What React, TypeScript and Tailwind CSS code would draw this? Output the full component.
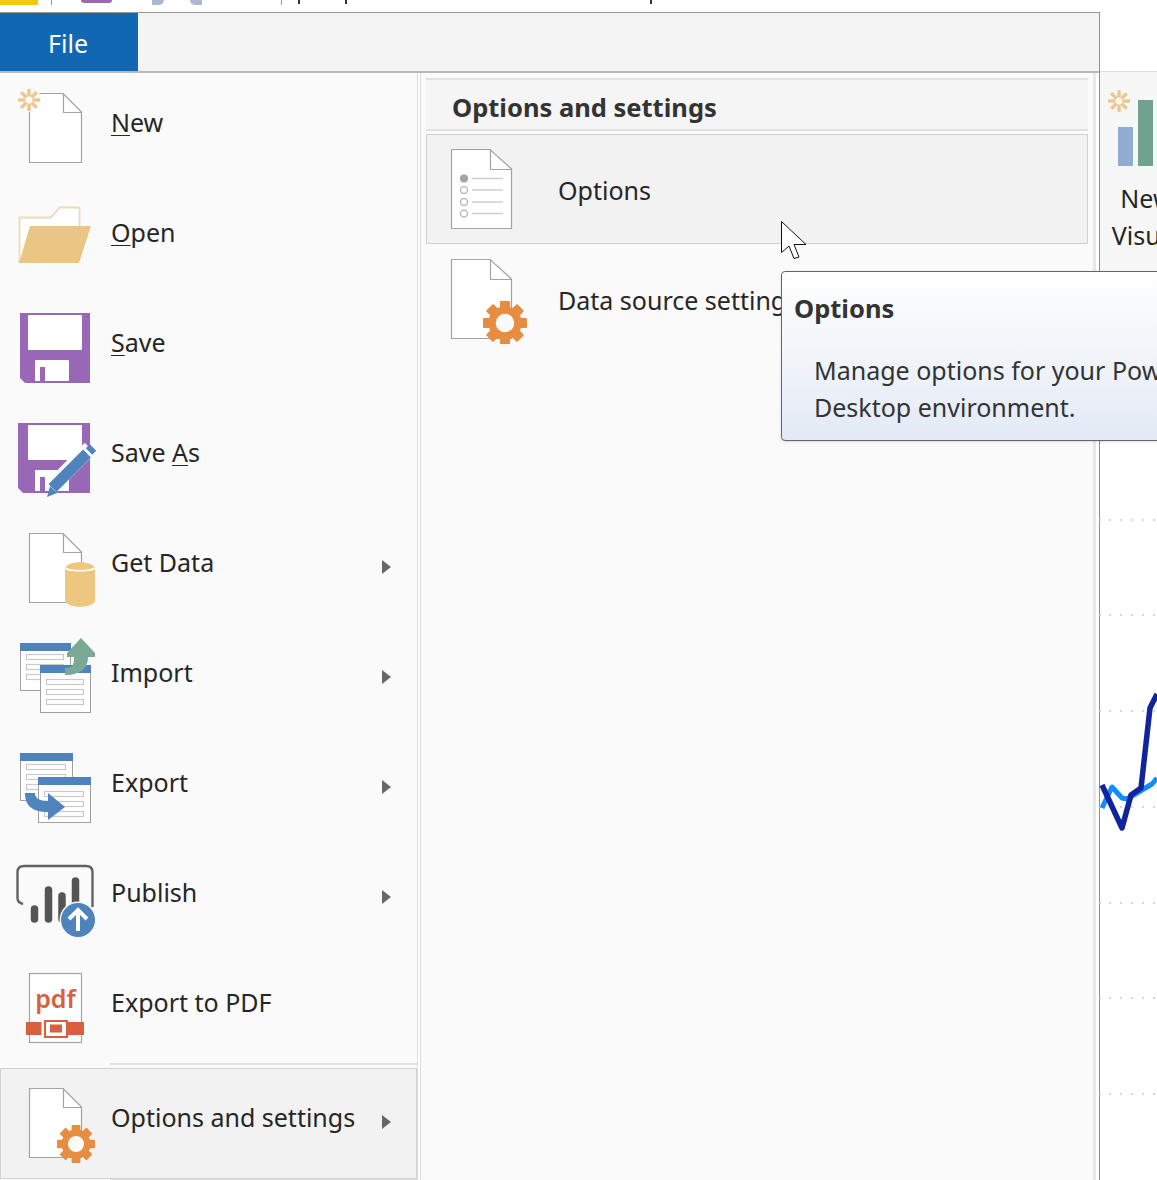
import { FC, ReactNode } from "react";

const FONT = "font-['Noto_Sans',sans-serif]";

const Gear: FC<{ cx: number; cy: number; r: number }> = ({ cx, cy, r }) => (
  <g>
    {[0, 45, 90, 135].map((a) => (
      <rect
        key={a}
        x={cx - r * 0.23}
        y={cy - r}
        width={r * 0.46}
        height={r * 2}
        rx={1}
        fill="#e68d42"
        transform={`rotate(${a} ${cx} ${cy})`}
      />
    ))}
    <circle cx={cx} cy={cy} r={r * 0.76} fill="#e68d42" />
    <circle cx={cx} cy={cy} r={r * 0.42} fill="#fafafa" />
  </g>
);

const Spark: FC<{ cx: number; cy: number }> = ({ cx, cy }) => (
  <g stroke="#edc88e" strokeWidth="3.4">
    {[0, 45, 90, 135].map((a) => (
      <g key={a} transform={`rotate(${a} ${cx} ${cy})`}>
        <line x1={cx} y1={cy - 11} x2={cx} y2={cy - 3.5} />
        <line x1={cx} y1={cy + 3.5} x2={cx} y2={cy + 11} />
      </g>
    ))}
  </g>
);

const Doc: FC = () => (
  <>
    <path d="M15.5 6.5H49L67.5 25V75.5H15.5Z" fill="#fff" stroke="#a3a3a3" strokeWidth="1.2" />
    <path d="M49.5 6.5V25.5H67.5" fill="none" stroke="#a3a3a3" strokeWidth="1.2" />
  </>
);

const Table: FC<{ x: number; y: number; w: number; h: number; rows: number[] }> = ({ x, y, w, h, rows }) => (
  <>
    <rect x={x + 0.5} y={y + 0.5} width={w} height={h} fill="#fff" stroke="#a0a0a0" />
    <rect x={x} y={y} width={w + 1} height={8} fill="#4f83bb" />
    {rows.map((r) => (
      <rect key={r} x={x + 6.5} y={r + 0.5} width={w - 13} height={5} fill="#fff" stroke="#c9c9c9" strokeWidth="1.2" />
    ))}
  </>
);

const Floppy: FC<{ top: number; left: number }> = ({ top, left }) => (
  <>
    <path d={`M${left} ${top}H76V${top + 70}H${left + 5}L${left} ${top + 65}Z`} fill="#9868b6" />
    <rect x="14" y={top + 2} width="54" height="35" rx="1" fill="#fff" />
    <rect x="21" y={top + 47} width="34" height="21" rx="1" fill="#fff" />
    <rect x="26" y={top + 54} width="5" height="15" fill="#9868b6" />
  </>
);

const icons: Record<string, ReactNode> = {
  new: (
    <>
      <Doc />
      <circle cx="15" cy="13" r="12" fill="#fafafa" />
      <Spark cx={15} cy={13} />
    </>
  ),
  open: (
    <>
      <path d="M5.5 66V20.5H37L45.5 10.5H64C65 10.5 65.5 11 65.5 12V32" fill="#fff" stroke="#eed9b8" strokeWidth="1.8" />
      <path d="M16 29H77L65 66H5Z" fill="#ebc583" />
    </>
  ),
  save: <Floppy top={6} left={6} />,
  saveAs: (
    <>
      <Floppy top={6} left={4} />
      <path d="M37 70L76 31" stroke="#fafafa" strokeWidth="15" />
      <path d="M38.5 71L73 36.5" stroke="#4f83bb" strokeWidth="11" />
      <path d="M75 34.5L79 30.5" stroke="#4f83bb" strokeWidth="9" />
      <path d="M33 80L36 69L43 76Z" fill="#4f83bb" />
    </>
  ),
  getData: (
    <>
      <Doc />
      <path d="M51 42C51 33 81 33 81 42V73C81 82 51 82 51 73Z" fill="#edc77f" />
      <path d="M51 40C51 45 81 45 81 40" fill="none" stroke="#fff" strokeWidth="1.6" />
    </>
  ),
  import: (
    <>
      <Table x={6} y={6} w={50} h={47} rows={[17, 27, 37]} />
      <Table x={26} y={28} w={50} h={47} rows={[42, 52, 62]} />
      <path d="M67 1L81 16V20H74C74 30 68 38 51 38V31C60 31 60 26 60 20H53V16Z" fill="#7aaa96" />
    </>
  ),
  export: (
    <>
      <Table x={6} y={6} w={52} h={47} rows={[17, 27, 37]} />
      <Table x={24} y={30} w={52} h={45} rows={[44, 54, 64]} />
      <path d="M11 46H21C21 51 25 54 34 54V46L51 60L34 73V65C20 65 11 60 11 46Z" fill="#4f83bb" />
    </>
  ),
  publish: (
    <>
      <path d="M9 47C5 46 3.500 44 3.500 41V15C3.500 11 6 9 10 9H72C76 9 78.500 11 78.500 15V50" fill="none" stroke="#626262" strokeWidth="2.4" />
      <path d="M20.500 52V62M34.500 33V62M48 39V62M61.500 24V60" stroke="#555" strokeWidth="7.500" strokeLinecap="round" />
      <circle cx="64" cy="63" r="18.500" fill="#fafafa" />
      <circle cx="64" cy="63" r="17" fill="#4f83bb" />
      <path d="M64 74V54M55 62L64 53L73 62" fill="none" stroke="#fff" strokeWidth="4" />
    </>
  ),
  pdf: (
    <>
      <rect x="15.500" y="6.500" width="52" height="69" fill="#fff" stroke="#a3a3a3" strokeWidth="1.200" />
      <text x="41.500" y="41" textAnchor="middle" fontSize="25" fontWeight="600" fill="#d9603f" fontFamily="Noto Sans, sans-serif">
        pdf
      </text>
      <rect x="12" y="55" width="15.500" height="13" fill="#d9603f" />
      <rect x="54" y="55" width="16" height="13" fill="#d9603f" />
      <rect x="31" y="54" width="22" height="16" fill="#fff" stroke="#d9603f" strokeWidth="2" />
      <rect x="36" y="57.500" width="12" height="8" fill="#d9603f" />
    </>
  ),
  settings: (
    <>
      <Doc />
      <Gear cx={62} cy={62} r={19} />
    </>
  ),
};

const MenuRow: FC<{ icon: string; label: ReactNode; arrow?: boolean; hover?: boolean }> = ({ icon, label, arrow, hover }) => (
  <div className="flex h-[110px] items-start">
    <svg viewBox="0 0 84 84" className={`h-[84px] w-[84px] shrink-0 overflow-visible ${hover ? "mt-[13px] ml-[13px]" : "mt-[14px] ml-[14px]"}`}>
      {icons[icon]}
    </svg>
    <span className={`ml-[13px] text-[25px] leading-[37px] whitespace-nowrap text-[#262626] ${hover ? "mt-[30px]" : "mt-[31px]"}`}>{label}</span>
    {arrow && (
      <svg viewBox="0 0 9 16" className={`ml-auto h-4 w-[9px] shrink-0 ${hover ? "mt-[45px] mr-[25px]" : "mt-[46px] mr-[26px]"}`}>
        <path d="M0 1L9 8L0 15Z" fill="#686868" />
      </svg>
    )}
  </div>
);

const Mn: FC<{ children: ReactNode }> = ({ children }) => <span className="underline decoration-1 underline-offset-[3px]">{children}</span>;

const dotRows = [520, 615, 711, 807, 903, 998, 1094];
const dotCols = [1100, 1110, 1121, 1132, 1143, 1154];

export default function App() {
  return (
    <div className={`relative h-[1180px] w-[1157px] overflow-hidden bg-white ${FONT}`}>
      {/* what is left of the app behind the menu */}
      <div className="flex h-3 items-start">
        <div className="h-[5px] w-[38px] bg-[#f2c811]" />
        <div className="ml-[13px] h-[5px] w-px bg-[#999]" />
        <div className="ml-[29px] h-[3px] w-[31px] rounded-b-sm bg-[#9868b6]" />
        <div className="ml-10 h-[5px] w-3 rounded-br-md bg-[#a9b8d0]" />
        <div className="ml-[26px] h-[5px] w-3 rounded-bl-md bg-[#a9b8d0]" />
        <div className="ml-[79px] h-[5px] w-px bg-[#999]" />
        <div className="ml-4 h-1 w-0.5 bg-[#333]" />
        <div className="ml-[45px] h-1 w-0.5 bg-[#333]" />
        <div className="ml-[303px] h-1 w-0.5 bg-[#333]" />
      </div>

      <div className="flex">
        <div className="h-[1168px] w-[1100px] shrink-0 border-t border-r border-t-[#999] border-r-[#8f8f8f]">
          <div className="flex h-[60px] border-b-2 border-[#b9b9b9] bg-[#f4f4f4]">
            <div className="flex h-[58px] w-[138px] items-center justify-center bg-[#1068b3] pt-[3px] pr-0.5 text-[25px] text-white">File</div>
          </div>

          <div className="flex">
            <div className="h-[1107px] w-[418px] shrink-0 border-r border-[#dcdcdc] bg-[#fafafa]">
              <MenuRow icon="new" label={<><Mn>N</Mn>ew</>} />
              <MenuRow icon="open" label={<><Mn>O</Mn>pen</>} />
              <MenuRow icon="save" label={<><Mn>S</Mn>ave</>} />
              <MenuRow icon="saveAs" label={<>Save <Mn>A</Mn>s</>} />
              <MenuRow icon="getData" label="Get Data" arrow />
              <MenuRow icon="import" label="Import" arrow />
              <MenuRow icon="export" label="Export" arrow />
              <MenuRow icon="publish" label="Publish" arrow />
              <MenuRow icon="pdf" label="Export to PDF" />
              <div className="mb-[3px] ml-[110px] h-0.5 bg-[#e2e2e2]" />
              <div className="h-[111px] border border-[#d2d2d2] bg-[#f2f2f2]">
                <MenuRow icon="settings" label="Options and settings" arrow hover />
              </div>
              <div className="ml-[110px] h-0.5 bg-[#dcdcdc]" />
            </div>

            <div className="ml-0.5 flex-1 border-l border-[#dcdcdc]">
              <div className="mr-[3px] h-[1107px] border-r-[3px] border-[#e8e8e8] bg-[#fafafa] pt-[5px] pl-[5px]">
                <div className="mr-[5px]">
                  <div className="h-[53px] border-y-2 border-[#e2e2e2] bg-[#f5f5f5] pl-[26px] text-[25.500px] leading-[55px] font-bold text-[#333]">
                    Options and settings
                  </div>
                  <div className="mt-[3px] flex h-[110px] items-start border border-[#cfcfcf] bg-[#f2f2f2]">
                    <svg viewBox="0 0 90 90" className="mt-[9px] ml-[19px] h-[90px] w-[90px] shrink-0">
                      <path d="M5.500 5.500H44L65.500 25V84.500H5.500Z" fill="#fff" stroke="#a3a3a3" strokeWidth="1.200" />
                      <path d="M44.500 5.500V25.500H65.500" fill="none" stroke="#a3a3a3" strokeWidth="1.200" />
                      <circle cx="18" cy="34.500" r="4" fill="#a3a3a3" />
                      {[46, 58, 69.5].map((y) => (
                        <circle key={y} cx="18" cy={y} r="3.500" fill="none" stroke="#bcbcbc" strokeWidth="1.500" />
                      ))}
                      {[34.5, 46, 58, 69.5].map((y) => (
                        <line key={y} x1="26" x2="57" y1={y} y2={y} stroke="#c8c8c8" strokeWidth="1.300" />
                      ))}
                    </svg>
                    <span className="mt-[37px] ml-[22px] text-[25px] leading-[37px] text-[#262626]">Options</span>
                  </div>
                  <div className="flex h-[110px] items-start">
                    <svg viewBox="0 0 90 90" className="mt-2.5 ml-5 h-[90px] w-[90px] shrink-0">
                      <path d="M5.500 5.500H44L65.500 25V84.500H5.500Z" fill="#fff" stroke="#a3a3a3" strokeWidth="1.200" />
                      <path d="M44.500 5.500V25.500H65.500" fill="none" stroke="#a3a3a3" strokeWidth="1.200" />
                      <Gear cx={59} cy={69} r={22} />
                    </svg>
                    <span className="mt-[38px] ml-[22px] text-[25px] leading-[37px] whitespace-nowrap text-[#262626]">Data source settings</span>
                  </div>
                </div>
              </div>
            </div>
          </div>
        </div>

        {/* ribbon and chart on the right */}
        <div className="flex-1">
          <div className="mt-[59px] h-[220px] border-t border-[#dedede] bg-[#f7f7f7] pt-[13px] pl-[11px]">
            <svg viewBox="0 0 50 84" className="h-[84px] w-[50px] overflow-visible">
              <Spark cx={8} cy={16} />
              <rect x="7" y="42" width="15" height="39" fill="#8eadd1" />
              <rect x="27" y="15" width="15" height="66" fill="#6fa28f" />
            </svg>
            <div className="mt-[11px] w-[71px] text-center text-[25px] leading-[37px] whitespace-nowrap text-[#262626]">
              New
              <br />
              Visual
            </div>
          </div>
        </div>
      </div>

      <svg className="absolute top-0 left-0 h-[1180px] w-[1157px]" viewBox="0 0 1157 1180">
        {dotRows.map((y) => dotCols.map((x) => <circle key={`${x}-${y}`} cx={x} cy={y} r="0.9" fill="#c4c4c4" />))}
        <path d="M1102 808L1112 787L1122 798L1127 799L1152 784L1157 778" fill="none" stroke="#118dff" strokeWidth="5" strokeLinejoin="round" />
        <path d="M1102 785L1122 828L1131 795L1141 788L1150 708L1157 694" fill="none" stroke="#12239e" strokeWidth="5.500" strokeLinejoin="round" />
      </svg>

      {/* tooltip */}
      <div className="absolute top-[271px] left-[781px] h-[170px] w-[420px] rounded-sm border border-[#666] bg-gradient-to-b from-white to-[#e3eaf5] shadow-sm">
        <div className="mt-[18px] ml-3 text-[25.500px] leading-[37px] font-bold text-[#333]">Options</div>
        <div className="mt-[25px] ml-[32px] text-[25px] leading-[37px] whitespace-nowrap text-[#333]">
          Manage options for your Power BI
          <br />
          Desktop environment.
        </div>
      </div>

      {/* mouse pointer */}
      <svg viewBox="0 0 26 39" className="absolute top-[221px] left-[781px] h-[39px] w-[26px]">
        <path d="M0.500 0.500V31.500L8 25L13 37.500L18 36L13 23.500H25Z" fill="#fff" stroke="#111" strokeWidth="1" strokeLinejoin="miter" />
      </svg>
    </div>
  );
}
